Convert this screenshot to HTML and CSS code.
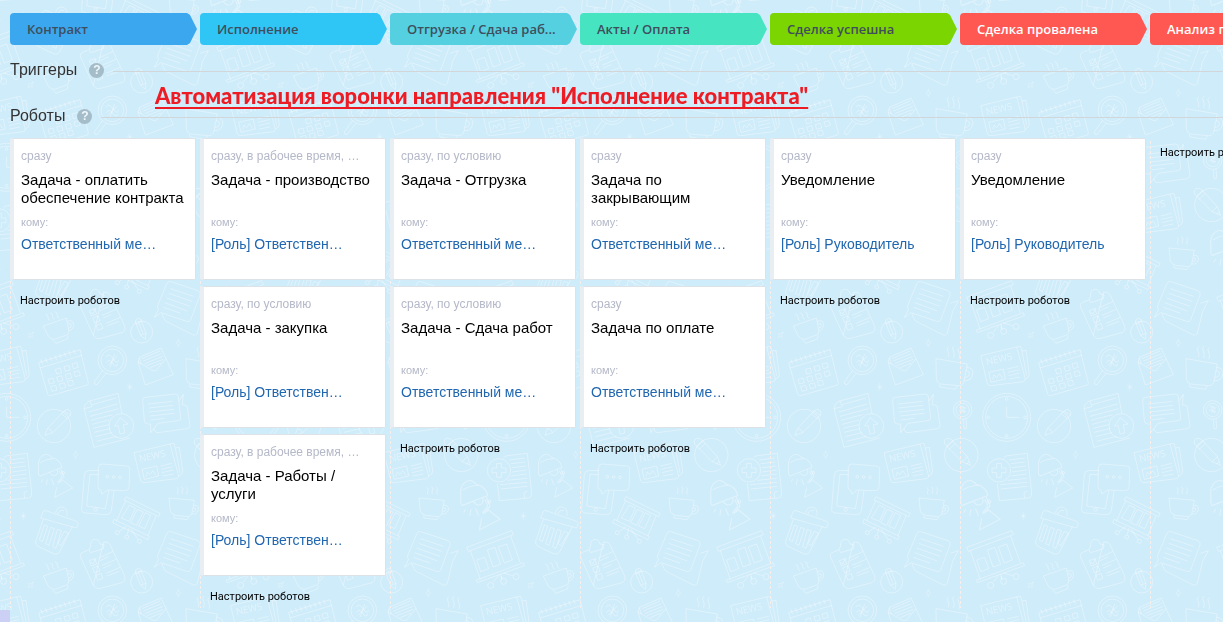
FILE: index.html
```html
<!DOCTYPE html>
<html lang="ru">
<head>
<meta charset="utf-8">
<title>Роботы и триггеры</title>
<link rel="stylesheet" href="styles.css">
</head>
<body>
<svg class="wallpaper" aria-hidden="true">
  <defs>
    <g id="board">
      <path d="M2 52 L137 2 L142 14 L7 64 Z M13 62 L43 148 M134 18 L163 98 M30 151 L172 98 L175 107 L34 158 Z M32 90 L56 82 L68 116 L44 125 Z M64 60 L87 52 L104 103 L81 111 Z M97 51 L122 42 L139 90 L115 99 Z M104 132 L108 149 M98 136 L82 156 M112 129 L140 137 M106 138 L106 146"/>
      <circle cx="74" cy="166" r="9"/><circle cx="113" cy="154" r="9"/><circle cx="150" cy="140" r="9"/>
    </g>
    <g id="cup">
      <path d="M2 36 L78 43 L70 84 Q68 90 60 92 L22 88 Q8 84 6 76 Z M76 58 Q92 56 90 72 Q86 86 71 84 M75 66 Q84 64 82 72 Q79 78 74 76 M16 89 L17 96 L56 101 L61 94 M26 4 q7 7 2 12 q-3 6 2 10 M40 2 q7 7 2 12 q-3 6 2 10 M54 4 q7 7 2 12 q-3 6 2 10"/>
    </g>
    <g id="news">
      <path d="M2 28 L110 2 L136 98 Q136 104 130 106 L32 118 Q24 118 22 112 Z M110 2 L122 0 L126 14 L138 12 L148 84 Q148 94 136 98 M126 14 L140 88 M26 78 L70 68 L76 98 L33 108 Z M38 100 L42 86 L50 94 L58 82 L68 96 M82 68 L116 60 M84 78 L118 70 M86 88 L120 80 M88 98 L120 92"/>
      <text x="20" y="57" transform="rotate(-13 20 57)">NEWS</text>
    </g>
    <g id="wallpaper-icons">
      <use href="#board" x="468" y="0"/>
      <path d="M692 714 L699 696 Q702 690 708 692 L800 724 Q807 728 804 734 L800 744 Z M700 718 L677 784 Q675 794 684 799 L733 822 Q742 825 748 817 L787 740 M737 699 Q740 680 756 681 Q774 684 771 708 M744 702 Q748 688 762 692 M703 735 L688 780 L697 785 L713 739 Z M722 742 L707 791 L717 796 L733 746 Z M742 748 L728 800 L738 805 L754 752 Z M763 754 L744 790 L752 798 L775 759 Z"/>
      <path d="M700 138 L769 114 L775 144 Q779 158 772 164 L735 178 Q722 178 716 170 Z M772 124 Q790 118 790 132 Q792 148 778 152 M774 132 Q784 128 784 136 Q784 144 777 144 M728 180 L738 190 L772 177 L775 166 M706 102 q10 3 8 11 q0 7 6 9 M720 98 q10 3 8 11 q0 7 6 9 M734 95 q10 3 8 11 q0 7 6 9"/>
      <path d="M812 82 Q808 70 820 66 L836 60 M880 37 Q894 34 900 44 L944 138 Q948 152 936 158 L868 176 Q856 178 850 166 Z M812 82 L850 166 M837 58 L842 49 Q840 30 854 28 Q868 28 870 42 L882 44 L880 56 L842 68 Z M838 92 L854 86 L860 102 L844 108 Z M848 114 L864 108 L870 123 L854 129 Z M858 136 L873 130 L879 145 L863 151 Z M842 96 l6 6 l10 -18 M866 84 L908 65 M870 92 L896 80 M876 106 L918 88 M880 114 L904 104 M888 130 L930 112 M890 138 L928 124"/>
      <circle cx="995" cy="156" r="33"/>
      <path d="M976 126 Q976 116 986 115 L992 117 L1008 160 L1006 178 L992 166 Z M978 132 L994 124 M992 166 L1008 160 M986 128 L999 161"/>
      <path d="M1070 12 Q1074 2 1086 6 L1164 32 Q1173 36 1170 45 L1142 120 Q1138 128 1130 124 L1053 98 L1033 112 L1046 88 Q1040 84 1044 74 Z M1056 102 L1062 116 Q1064 122 1072 126 L1150 165 Q1158 168 1162 160 L1178 94 L1195 62 L1171 70 M1082 26 L1150 49 M1076 40 L1146 64 M1070 54 L1140 79 M1064 68 L1132 93 M1060 82 L1110 99"/>
      <use href="#news" x="510" y="199"/>
      <use href="#news" x="970" y="490"/>
      <path d="M686 248 L810 209 L835 308 Q836 315 829 316 L722 347 Q716 348 713 342 Z M690 264 L816 226 M692 238 l6 14 M706 234 l6 14 M720 230 l6 14 M734 226 l6 14 M748 221 l6 14 M762 217 l6 14 M776 213 l6 14 M790 209 l6 14 M736 268 l15 -4 l4 14 l-15 4 Z M762 260 l15 -4 l4 14 l-15 4 Z M786 252 l15 -4 l4 14 l-15 4 Z M714 298 l15 -4 l4 14 l-15 4 Z M740 291 l15 -4 l4 14 l-15 4 Z M766 284 l15 -4 l4 14 l-15 4 Z M792 276 l15 -4 l4 14 l-15 4 Z M722 320 l15 -4 l4 14 l-15 4 Z M748 312 l15 -4 l4 14 l-15 4 Z M772 304 l15 -4 l4 14 l-15 4 Z"/>
      <circle cx="907" cy="241" r="43"/><circle cx="907" cy="241" r="34"/>
      <path d="M877 272 L853 306 Q852 314 861 314 L888 280 M888 232 q8 -12 16 -2 l12 15 q8 6 10 -4 M889 248 q8 -12 16 -2 l8 10 q8 6 10 -4 M914 222 L900 262 M922 228 L894 256"/>
      <path d="M984 246 L1006 315 L1090 284 L1068 236 L1040 270 Q1034 274 1026 270 L984 246 L988 234 M1068 236 L1053 204 L988 232 L994 252 M996 236 L1050 213 M1000 243 L1054 221 M1004 251 L1058 229 M1010 257 L1060 238 M1020 263 L1054 249"/>
      <path d="M1128 236 L1222 252 L1212 304 Q1208 318 1196 317 L1142 312 Q1130 309 1129 296 Z M1220 262 Q1242 264 1238 282 Q1234 304 1212 302 M1218 272 Q1230 273 1228 284 Q1224 294 1214 292 M1138 313 L1140 321 L1186 328 L1192 318 M1166 200 q-8 7 -2 14 q5 8 1 18 M1182 198 q-8 7 -2 14 q5 8 1 22 M1198 202 q-8 7 -2 14 q5 8 1 22"/>
      <circle cx="590" cy="412" r="72"/><circle cx="590" cy="412" r="63"/>
      <circle cx="590" cy="357" r="4"/><circle cx="590" cy="467" r="4"/><circle cx="535" cy="412" r="4"/><circle cx="645" cy="412" r="4"/>
      <path d="M590 380 V412 H628"/>
      <circle cx="732" cy="438" r="50"/>
      <path d="M705 466 L712 446 L762 393 Q770 385 778 390 Q786 396 781 406 L728 458 Z M712 446 Q724 446 728 458 M754 401 L772 416 M763 393 L781 406"/>
      <circle cx="934" cy="438" r="37"/>
      <path d="M822 386 Q822 372 836 364 L924 340 L936 401 M822 386 L852 502 L960 474 M822 386 L846 380 L840 362 M846 374 L918 354 M836 396 L922 372 M840 409 L926 386 M843 421 L908 404 M846 433 L898 420 M849 445 L896 434 M852 457 L900 446 M856 470 L906 458 M860 484 L920 469 M931 413 L914 438 L925 437 L930 462 L944 459 L940 434 L954 432 Z"/>
      <path d="M998 362 Q997 353 1006 352 L1096 342 Q1104 342 1105 350 L1112 412 Q1113 421 1104 422 L1044 430 L1022 458 L1022 432 L1012 432 Q1004 431 1003 422 Z M1032 446 L1034 452 Q1036 458 1044 458 L1132 446 Q1140 444 1140 436 L1132 380 Q1130 374 1123 375 L1117 375 L1120 343 L1106 364 M1014 372 L1088 364 M1016 384 L1090 376 M1018 396 L1092 388 M1020 408 L1094 400 M1022 420 L1064 415"/>
      <circle cx="1208" cy="390" r="28"/><circle cx="1208" cy="390" r="20"/>
      <path d="M1198 382 q8 -8 12 0 q4 7 9 0 M1197 393 q8 -8 12 0 q4 7 9 0 M1206 379 v20 M1212 379 v20 M1210 419 L1212 446 Q1220 450 1220 442 L1218 418"/>
      <circle cx="1204" cy="525" r="50"/>
      <path d="M1154 492 Q1150 480 1160 475 Q1170 474 1176 480 L1222 530 L1232 556 L1206 545 Z M1160 500 L1179 484 M1167 508 L1186 491 M1206 545 L1222 530 M1220 552 L1228 546"/>
      <circle cx="567" cy="571" r="35"/>
      <path d="M560 550 h14 v14 h14 v14 h-14 v14 h-14 v-14 h-14 v-14 h14 Z M580 534 Q584 528 592 527 L652 520 L665 638 Q666 652 656 654 L568 662 L562 610 M652 634 Q638 634 644 654 M598 540 L644 534 M602 551 L646 546 M606 563 L648 558 M606 576 L650 570 M602 588 L650 582 M592 601 L652 595 M570 614 L652 607 M572 627 L652 619"/>
      <g id="lamp">
        <path d="M686 566 Q682 540 696 528 Q712 516 726 533 Q750 538 756 562 L690 588 Q684 588 686 566 Z M691 548 Q708 536 730 536 M718 578 Q730 592 740 584 Q746 578 742 568 M752 566 L762 590 L748 606 M748 572 L756 590 L742 608 M744 610 L758 600 L788 624 L734 652 L740 622 M698 598 l-5 9 M712 598 l-3 17 M724 596 l8 19"/>
        <circle cx="760" cy="578" r="4"/>
      </g>
      <use href="#lamp" transform="translate(-336 0) scale(1.15)"/>
      <path d="M867 571 L836 572 Q824 572 823 584 L815 686 Q814 698 826 699 L890 704 Q902 704 904 692 L912 632 M866 584 L840 583 L830 678 L886 686 L896 632 M876 552 Q866 552 865 562 L864 620 Q864 629 872 630 L876 642 L892 630 L946 632 Q956 632 957 622 L959 568 Q960 559 951 558 Z"/>
      <circle cx="857" cy="689" r="5"/><circle cx="892" cy="590" r="4"/><circle cx="911" cy="591" r="4"/><circle cx="930" cy="592" r="4"/>
      <path d="M948 650 L1050 700 L1046 710 L942 660 Z M946 664 L920 722 M1038 708 L1014 766 M912 718 L1018 769 L1014 779 L908 728 Z M958 676 L976 684 L958 724 L934 714 Z M982 688 L1000 696 L980 736 L962 728 Z M1006 698 L1022 706 L1004 746 L986 738 Z M948 740 L928 754 M956 744 L952 764 M962 746 L984 778"/>
      <circle cx="922" cy="758" r="6"/><circle cx="950" cy="771" r="6"/><circle cx="988" cy="784" r="6"/>
      <use href="#cup" x="1075" y="618"/>
      <path d="M671 906 q-9 5 -4 16 q-6 -6 -12 1 q5 -8 0 -12 q8 2 16 -5 M1105 928 q1 9 7 11 q-6 2 -7 11 q-1 -9 -7 -11 q6 -2 7 -11 M797 513 q1 9 7 11 q-6 2 -7 11 q-1 -9 -7 -11 q6 -2 7 -11 M640 696 v24 M631 708 h18 M634 701 l12 14 M646 701 l-12 14 M959 309 v24 M950 321 h18 M953 314 l12 14 M965 314 l-12 14" stroke-width="2"/>
    </g>
    <pattern id="office" width="750" height="750" patternUnits="userSpaceOnUse" patternTransform="translate(60 30) scale(0.33333)">
      <g class="doodle">
        <use href="#wallpaper-icons" x="0" y="0"/>
        <use href="#wallpaper-icons" x="-750" y="0"/>
        <use href="#wallpaper-icons" x="0" y="-750"/>
        <use href="#wallpaper-icons" x="-750" y="-750"/>
      </g>
    </pattern>
  </defs>
  <rect width="100%" height="100%" fill="url(#office)"/>
</svg>

<main class="page">
  <ol class="stages">
    <li class="stage stage-blue">Контракт</li>
    <li class="stage stage-sky">Исполнение</li>
    <li class="stage stage-aqua">Отгрузка / Сдача раб...</li>
    <li class="stage stage-mint">Акты / Оплата</li>
    <li class="stage stage-green">Сделка успешна</li>
    <li class="stage stage-red">Сделка провалена</li>
    <li class="stage stage-red">Анализ причины</li>
  </ol>

  <section class="section-head">
    <h2>Триггеры</h2>
    <button class="help" type="button" aria-label="Справка о триггерах">?</button>
    <span class="rule"></span>
  </section>
  <section class="section-head">
    <h2>Роботы</h2>
    <button class="help" type="button" aria-label="Справка о роботах">?</button>
    <span class="rule"></span>
  </section>

  <div class="columns">
    <div class="column">
      <article class="card"><p class="when">сразу</p><h3>Задача - оплатить обеспечение контракта</h3><p class="to">кому:</p><a class="who" href="#">Ответственный ме…</a></article>
      <a class="setup" href="#">Настроить роботов</a>
    </div>
    <div class="column">
      <article class="card"><p class="when">сразу, в рабочее время, …</p><h3>Задача - производство</h3><p class="to">кому:</p><a class="who" href="#">[Роль] Ответствен…</a></article>
      <article class="card"><p class="when">сразу, по условию</p><h3>Задача - закупка</h3><p class="to">кому:</p><a class="who" href="#">[Роль] Ответствен…</a></article>
      <article class="card"><p class="when">сразу, в рабочее время, …</p><h3>Задача - Работы / услуги</h3><p class="to">кому:</p><a class="who" href="#">[Роль] Ответствен…</a></article>
      <a class="setup" href="#">Настроить роботов</a>
    </div>
    <div class="column">
      <article class="card"><p class="when">сразу, по условию</p><h3>Задача - Отгрузка</h3><p class="to">кому:</p><a class="who" href="#">Ответственный ме…</a></article>
      <article class="card"><p class="when">сразу, по условию</p><h3>Задача - Сдача работ</h3><p class="to">кому:</p><a class="who" href="#">Ответственный ме…</a></article>
      <a class="setup" href="#">Настроить роботов</a>
    </div>
    <div class="column">
      <article class="card"><p class="when">сразу</p><h3>Задача по закрывающим</h3><p class="to">кому:</p><a class="who" href="#">Ответственный ме…</a></article>
      <article class="card"><p class="when">сразу</p><h3>Задача по оплате</h3><p class="to">кому:</p><a class="who" href="#">Ответственный ме…</a></article>
      <a class="setup" href="#">Настроить роботов</a>
    </div>
    <div class="column">
      <article class="card"><p class="when">сразу</p><h3>Уведомление</h3><p class="to">кому:</p><a class="who" href="#">[Роль] Руководитель</a></article>
      <a class="setup" href="#">Настроить роботов</a>
    </div>
    <div class="column">
      <article class="card"><p class="when">сразу</p><h3>Уведомление</h3><p class="to">кому:</p><a class="who" href="#">[Роль] Руководитель</a></article>
      <a class="setup" href="#">Настроить роботов</a>
    </div>
    <div class="column">
      <a class="setup" href="#">Настроить роботов</a>
    </div>
  </div>

  <h1 class="caption">Автоматизация воронки направления "Исполнение контракта"</h1>
  <span class="corner"></span>
</main>
</body>
</html>
```
FILE: styles.css
```css
* { box-sizing: border-box; }
body, h1, h2, h3, p, ol { margin: 0; padding: 0; }
body {
  background: #cfecfa;
  color: #000;
  font-family: "Liberation Sans", Arial, sans-serif;
  overflow: hidden;
}
a { text-decoration: none; }

.wallpaper {
  position: fixed;
  inset: 0;
  width: 100%;
  height: 100%;
  z-index: -1;
}
.doodle {
  fill: none;
  stroke: #fff;
  stroke-opacity: 0.36;
  stroke-width: 3;
  stroke-linejoin: round;
}
#news text {
  font-family: "Open Sans", sans-serif;
  font-size: 29px;
  fill: #fff;
  fill-opacity: 0.4;
  stroke: none;
}

.page {
  position: relative;
  min-height: 100vh;
  padding: 13px 0 14px 10px;
  overflow: hidden;
}

.stages {
  display: grid;
  grid-template-columns: repeat(7, 187px);
  gap: 3px;
  list-style: none;
}
.stage {
  height: 32px;
  padding-left: 17px;
  border-radius: 4px;
  clip-path: polygon(0 0, 177px 0, 180px 2px, 100% 50%, 180px 30px, 177px 100%, 0 100%);
  color: #3f4e5c;
  font: 600 13px/32px "Open Sans", sans-serif;
  white-space: nowrap;
}
.stage-blue { background: #3ba7ef; }
.stage-sky { background: #2fc6f6; }
.stage-aqua { background: #55d0e0; }
.stage-mint { background: #47e4c2; }
.stage-green { background: #7bd500; }
.stage-red { background: #ff5752; color: #fff; }

.section-head {
  display: flex;
  align-items: center;
  height: 46px;
}
.section-head:first-of-type { margin-top: 2px; }
.section-head h2 {
  padding-bottom: 1px;
  color: #333;
  font-size: 16px;
  font-weight: 400;
  line-height: 20px;
}
.help {
  width: 15px;
  height: 15px;
  margin: 1px 9px 0 12px;
  padding: 0;
  border: 0;
  border-radius: 50%;
  background: #a5bcc9;
  color: #eef8fc;
  font: 700 12px/15px "Liberation Sans", sans-serif;
}
.rule {
  flex: 1;
  height: 1px;
  margin-top: 2px;
  background: #d2d6d9;
}

.columns {
  display: grid;
  grid-template-columns: repeat(7, 190px);
  min-height: 470px;
  margin-top: -1px;
}
.column {
  display: flex;
  flex-direction: column;
  align-items: flex-start;
  gap: 6px;
  padding-right: 4px;
  background: repeating-linear-gradient(#f8efec 0 3px, transparent 3px 5px) 0 3px / 1px 100% no-repeat;
}
.card {
  align-self: stretch;
  min-height: 142px;
  padding: 9px 8px 0 7px;
  border: 1px solid #dce2e6;
  border-left: 4px solid #e9eef3;
  border-radius: 2px;
  background: #fff;
}
.when {
  color: #b4b8c8;
  font-size: 12px;
  line-height: 16px;
  white-space: nowrap;
}
.card h3 {
  min-height: 36px;
  margin-top: 7px;
  font-size: 15px;
  font-weight: 400;
  line-height: 18px;
}
.to {
  margin-top: 8px;
  color: #b4b8c8;
  font-size: 11px;
  line-height: 14px;
}
.who {
  display: block;
  margin-top: 6px;
  color: #2067b0;
  font-size: 14px;
  line-height: 18px;
  white-space: nowrap;
}
.setup {
  margin: 7px 0 0 10px;
  color: #000;
  font: 400 11px/16px Roboto, sans-serif;
  white-space: nowrap;
}

.caption {
  position: absolute;
  top: 81px;
  left: 155px;
  color: #ed1c24;
  font: 900 22px/30px Lato, "Open Sans", sans-serif;
  text-decoration: underline 2px;
  text-underline-offset: 3px;
  text-decoration-skip-ink: none;
  white-space: nowrap;
}
.corner {
  position: absolute;
  left: 0;
  bottom: 0;
  width: 10px;
  height: 12px;
  background: #cbd0f4;
}
```
